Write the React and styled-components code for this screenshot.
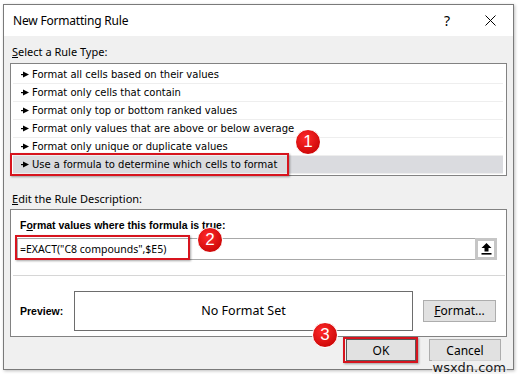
import React from 'react'
import styled, { createGlobalStyle } from 'styled-components'

const GlobalStyle = createGlobalStyle`
  html, body {
    margin: 0;
    padding: 0;
    background: #ffffff;
  }
  body {
    font-family: "Noto Sans", "Open Sans", sans-serif;
    color: #000;
  }
`

const Page = styled.div`
  width: 519px;
  height: 374px;
  padding: 4px 0 0 3px;
  box-sizing: border-box;
  position: relative;
  overflow: hidden;
`

const Dialog = styled.div`
  width: 511px;
  height: 366px;
  box-sizing: border-box;
  border: 1px solid #7a7a7a;
  background: #f0f0f0;
  box-shadow: 1px 1px 3px rgba(0, 0, 0, 0.25);
  display: flex;
  flex-direction: column;
  position: relative;
`

const TitleBar = styled.div`
  height: 31px;
  background: #ffffff;
  display: flex;
  align-items: center;
  padding: 0 0 0 9px;
  font-size: 12px;
  letter-spacing: -0.2px;
`

const Title = styled.div`
  flex: 1;
`

const TitleButton = styled.div`
  width: ${p => p.w}px;
  height: 31px;
  display: flex;
  align-items: center;
  justify-content: center;
  font-size: 14px;
`

const Body = styled.div`
  flex: 1;
  padding: 0 6px 0 6px;
  display: flex;
  flex-direction: column;
  font-family: "DejaVu Sans", Tahoma, sans-serif;
  font-size: 10px;
`

const SectionLabel = styled.div`
  height: ${p => p.h}px;
  box-sizing: border-box;
  padding-top: ${p => p.pt}px;
  display: flex;
  align-items: center;
  padding-left: 2px;
  font-family: "Noto Sans", sans-serif;
  font-size: 11px;
  u { text-decoration: underline; }
`

const RuleList = styled.div`
  height: 113px;
  box-sizing: border-box;
  border: 1px solid #828282;
  background: #ffffff;
  padding: 2px 3px 0 2px;
  position: relative;
`

const RuleRow = styled.div`
  height: 18px;
  box-sizing: border-box;
  border-bottom: 1px solid #eeeeee;
  display: flex;
  align-items: center;
  gap: 3px;
  padding-left: 8px;
  background: ${p => (p.selected ? '#dadbdf' : 'transparent')};
`

const Highlight = styled.div`
  position: absolute;
  left: ${p => p.l}px;
  top: ${p => p.t}px;
  width: ${p => p.w}px;
  height: ${p => p.h}px;
  border: 2px solid #d7141e;
  box-sizing: border-box;
  box-shadow: 1px 1px 2px rgba(0, 0, 0, 0.35);
  pointer-events: none;
`

const Badge = styled.div`
  position: absolute;
  left: ${p => p.x - 13}px;
  top: ${p => p.y - 13}px;
  width: 26px;
  height: 26px;
  border-radius: 50%;
  background: radial-gradient(circle at 40% 35%, #ff2a2a, #d10a0a 70%);
  border: 1px solid #ffffff;
  box-sizing: border-box;
  color: #ffffff;
  font-family: "Liberation Sans", Arial, sans-serif;
  font-size: 17px;
  display: flex;
  align-items: center;
  justify-content: center;
  z-index: 2;
`

const DescPanel = styled.div`
  height: 128px;
  box-sizing: border-box;
  border: 1px solid #828282;
  background: #ffffff;
  display: flex;
  flex-direction: column;
  position: relative;
`

const FormulaArea = styled.div`
  height: 66px;
  padding: 6px 8px 0 4px;
  box-sizing: border-box;
  border-bottom: 1px solid #d6d6d6;
  margin: 0 1px 0 2px;
`

const BoldLabel = styled.div`
  font-family: "Liberation Sans", Arial, sans-serif;
  font-weight: bold;
  font-size: 10.5px;
  height: 18px;
  display: flex;
  align-items: center;
  padding-left: 3px;
  u { text-decoration: underline; }
`

const FormulaInput = styled.div`
  margin-top: 4px;
  height: 22px;
  box-sizing: border-box;
  border: 1px solid #a8a8a8;
  display: flex;
  align-items: center;
  justify-content: space-between;
  padding-left: 2px;
  font-size: 10.5px;
  font-family: "Noto Sans", sans-serif;
`

const CollapseButton = styled.div`
  width: 22px;
  height: 22px;
  margin: -1px -1px -1px 0;
  box-sizing: border-box;
  border: 3px solid #c6c6c6;
  background: #ffffff;
  display: flex;
  align-items: center;
  justify-content: center;
`

const PreviewRow = styled.div`
  flex: 1;
  display: flex;
  align-items: center;
  padding: 9px 10px 0 9px;
`

const PreviewLabel = styled.div`
  width: 54px;
  font-family: "Liberation Sans", Arial, sans-serif;
  font-weight: bold;
  font-size: 10.5px;
`

const PreviewBox = styled.div`
  width: 339px;
  height: 40px;
  box-sizing: border-box;
  border: 1px solid #6d6d6d;
  display: flex;
  align-items: center;
  justify-content: center;
  font-family: "Noto Sans", sans-serif;
  font-size: 12.5px;
`

const Button = styled.div`
  width: ${p => p.w}px;
  height: 22px;
  box-sizing: border-box;
  border: 1px solid ${p => (p.primary ? '#5a5a5a' : '#adadad')};
  background: #e1e1e1;
  display: flex;
  align-items: center;
  justify-content: center;
  font-family: "Noto Sans", sans-serif;
  font-size: 12px;
  u { text-decoration: underline; }
`

const FormatButtonWrap = styled.div`
  margin-left: auto;
`

const Footer = styled.div`
  flex: 1;
  display: flex;
  justify-content: flex-end;
  align-items: flex-start;
  padding: 2px 6px 0 0;
  gap: 13px;
  position: relative;
`

const Watermark = styled.div`
  position: absolute;
  right: 0;
  bottom: -6px;
  font-family: "DejaVu Sans", sans-serif;
  font-size: 13px;
  line-height: 15px;
  color: #1a1a1a;
  background: rgba(240, 240, 240, 0.6);
  padding: 0 1px;
  z-index: 3;
`

const Pointer = () => (
  <svg width='8' height='7' viewBox='0 0 8 7'>
    <rect x='0' y='3' width='3' height='1.2' fill='#000' />
    <path d='M2 0.5 L8 3.5 L2 6.5 Z' fill='#000' />
  </svg>
)

const UploadIcon = () => (
  <svg width='11' height='12' viewBox='0 0 11 12'>
    <path d='M5.5 0 L10.5 5 L7.5 5 L7.5 8.5 L3.5 8.5 L3.5 5 L0.5 5 Z' fill='#000' />
    <rect x='0.5' y='10' width='10' height='1.6' fill='#000' />
  </svg>
)

const CloseIcon = () => (
  <svg width='11' height='11' viewBox='0 0 11 11'>
    <path d='M0.5 0.5 L10.5 10.5 M10.5 0.5 L0.5 10.5' stroke='#000' strokeWidth='1' />
  </svg>
)

const rules = [
  'Format all cells based on their values',
  'Format only cells that contain',
  'Format only top or bottom ranked values',
  'Format only values that are above or below average',
  'Format only unique or duplicate values',
  'Use a formula to determine which cells to format'
]

const App = () => (
  <Page>
    <GlobalStyle />
    <Dialog>
      <TitleBar>
        <Title>New Formatting Rule</Title>
        <TitleButton w={40}>?</TitleButton>
        <TitleButton w={46}><CloseIcon /></TitleButton>
      </TitleBar>
      <Body>
        <SectionLabel h={27} pt={3}><span><u>S</u>elect a Rule Type:</span></SectionLabel>
        <RuleList>
          {rules.map((r, i) => (
            <RuleRow key={r} selected={i === rules.length - 1}>
              <Pointer />
              <span>{r}</span>
            </RuleRow>
          ))}
          <Highlight l={-1} t={89} w={279} h={23} />
          <Badge x={297} y={78}>1</Badge>
        </RuleList>
        <SectionLabel h={33} pt={12}><span><u>E</u>dit the Rule Description:</span></SectionLabel>
        <DescPanel>
          <FormulaArea>
            <BoldLabel><span>F<u>o</u>rmat values where this formula is true:</span></BoldLabel>
            <FormulaInput>
              <span>=EXACT("C8 compounds",$E5)</span>
              <CollapseButton><UploadIcon /></CollapseButton>
            </FormulaInput>
          </FormulaArea>
          <PreviewRow>
            <PreviewLabel>Preview:</PreviewLabel>
            <PreviewBox>No Format Set</PreviewBox>
            <FormatButtonWrap>
              <Button w={73}><span><u>F</u>ormat...</span></Button>
            </FormatButtonWrap>
          </PreviewRow>
          <Highlight l={4} t={25} w={175} h={25} />
          <Badge x={199} y={30}>2</Badge>
        </DescPanel>
        <Footer>
          <Button w={70} primary>OK</Button>
          <Button w={72}>Cancel</Button>
          <Highlight l={333} t={0} w={75} h={26} />
          <Badge x={315} y={-2}>3</Badge>
          <Watermark>wsxdn.com</Watermark>
        </Footer>
      </Body>
    </Dialog>
  </Page>
)

export default App
